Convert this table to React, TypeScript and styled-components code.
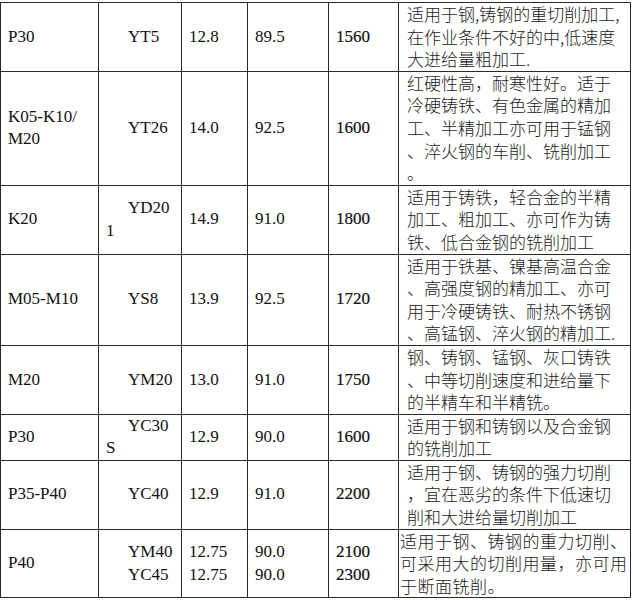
import styled, { createGlobalStyle } from "styled-components";

const GlobalStyle = createGlobalStyle`
    html, body {
        margin: 0;
        padding: 0;
        background: #ffffff;
    }
`;

type Grade = {
    iso: string;
    codes: string[];
    density: string[];
    hardness: string[];
    strength: string[];
    usage: string;
    flush?: boolean;
    spacing?: number;
};

const grades: Grade[] = [
    {
        iso: "P30",
        codes: ["YT5"],
        density: ["12.8"],
        hardness: ["89.5"],
        strength: ["1560"],
        usage: "适用于钢,铸钢的重切削加工,\n在作业条件不好的中,低速度\n大进给量粗加工.",
    },
    {
        iso: "K05-K10/\nM20",
        codes: ["YT26"],
        density: ["14.0"],
        hardness: ["92.5"],
        strength: ["1600"],
        usage: "红硬性高，耐寒性好。适于\n冷硬铸铁、有色金属的精加\n工、半精加工亦可用于锰钢\n、淬火钢的车削、铣削加工\n。",
    },
    {
        iso: "K20",
        codes: ["YD20\n1"],
        density: ["14.9"],
        hardness: ["91.0"],
        strength: ["1800"],
        usage: "适用于铸铁，轻合金的半精\n加工、粗加工、亦可作为铸\n铁、低合金钢的铣削加工",
    },
    {
        iso: "M05-M10",
        codes: ["YS8"],
        density: ["13.9"],
        hardness: ["92.5"],
        strength: ["1720"],
        usage: "适用于铁基、镍基高温合金\n、高强度钢的精加工、亦可\n用于冷硬铸铁、耐热不锈钢\n、高锰钢、淬火钢的精加工.",
    },
    {
        iso: "M20",
        codes: ["YM20"],
        density: ["13.0"],
        hardness: ["91.0"],
        strength: ["1750"],
        usage: "钢、铸钢、锰钢、灰口铸铁\n、中等切削速度和进给量下\n的半精车和半精铣。",
    },
    {
        iso: "P30",
        codes: ["YC30\nS"],
        density: ["12.9"],
        hardness: ["90.0"],
        strength: ["1600"],
        usage: "适用于钢和铸钢以及合金钢\n的铣削加工",
    },
    {
        iso: "P35-P40",
        codes: ["YC40"],
        density: ["12.9"],
        hardness: ["91.0"],
        strength: ["2200"],
        usage: "适用于钢、铸钢的强力切削\n，宜在恶劣的条件下低速切\n削和大进给量切削加工",
    },
    {
        iso: "P40",
        codes: ["YM40", "YC45"],
        density: ["12.75", "12.75"],
        hardness: ["90.0", "90.0"],
        strength: ["2100", "2300"],
        usage: "适用于钢、铸钢的重力切削、\n可采用大的切削用量，亦可用\n于断面铣削。",
        flush: true,
        spacing: 0.5,
    },
];

const App = () => {
    return (
        <>
            <GlobalStyle />
            <Page>
                <Table>
                    <colgroup>
                        <col style={{ width: 98 }} />
                        <col style={{ width: 83 }} />
                        <col style={{ width: 66 }} />
                        <col style={{ width: 81 }} />
                        <col style={{ width: 70 }} />
                        <col style={{ width: 232 }} />
                    </colgroup>
                    <tbody>
                        {grades.map((g, i) => (
                            <tr key={i}>
                                <Cell>
                                    <Para>{g.iso}</Para>
                                </Cell>
                                <Cell>
                                    {g.codes.map((c, j) => (
                                        <Para key={j} $indent>{c}</Para>
                                    ))}
                                </Cell>
                                <Cell>
                                    {g.density.map((v, j) => (
                                        <Para key={j}>{v}</Para>
                                    ))}
                                </Cell>
                                <Cell>
                                    {g.hardness.map((v, j) => (
                                        <Para key={j}>{v}</Para>
                                    ))}
                                </Cell>
                                <Cell>
                                    {g.strength.map((v, j) => (
                                        <Para key={j} $bold>{v}</Para>
                                    ))}
                                </Cell>
                                <UsageCell $flush={g.flush} $spacing={g.spacing ?? 0}>
                                    {g.usage}
                                </UsageCell>
                            </tr>
                        ))}
                    </tbody>
                </Table>
            </Page>
        </>
    );
};

const Page = styled.div`
    padding: 2px 0 0 0;
`;

const Table = styled.table`
    width: 631px;
    table-layout: fixed;
    border-collapse: collapse;
    border: 1px solid #1c1c1c;
    font-family: "Liberation Serif", "Noto Sans CJK SC", serif;
    font-size: 17px;
    color: #111;
`;

const Cell = styled.td`
    border: 1px solid #2a2a2a;
    padding: 0 0 0 7px;
    vertical-align: middle;
    line-height: 22.6px;
    white-space: pre-line;
    overflow: hidden;
`;

const Para = styled.div<{ $indent?: boolean; $bold?: boolean }>`
    text-indent: ${(p) => (p.$indent ? "22px" : "0")};
    white-space: pre-line;
    -webkit-text-stroke: ${(p) => (p.$bold ? "0.2px #111" : "0")};
`;

const UsageCell = styled.td<{ $flush?: boolean; $spacing: number }>`
    border: 1px solid #2a2a2a;
    padding: 0 0 0 ${(p) => (p.$flush ? "1px" : "8px")};
    vertical-align: middle;
    line-height: 22.6px;
    white-space: pre;
    overflow: hidden;
    font-family: "Noto Sans CJK SC", "Liberation Serif", sans-serif;
    font-size: 17px;
    font-weight: 300;
    letter-spacing: ${(p) => p.$spacing}px;
    color: #1a1a1a;
`;

export default App;
